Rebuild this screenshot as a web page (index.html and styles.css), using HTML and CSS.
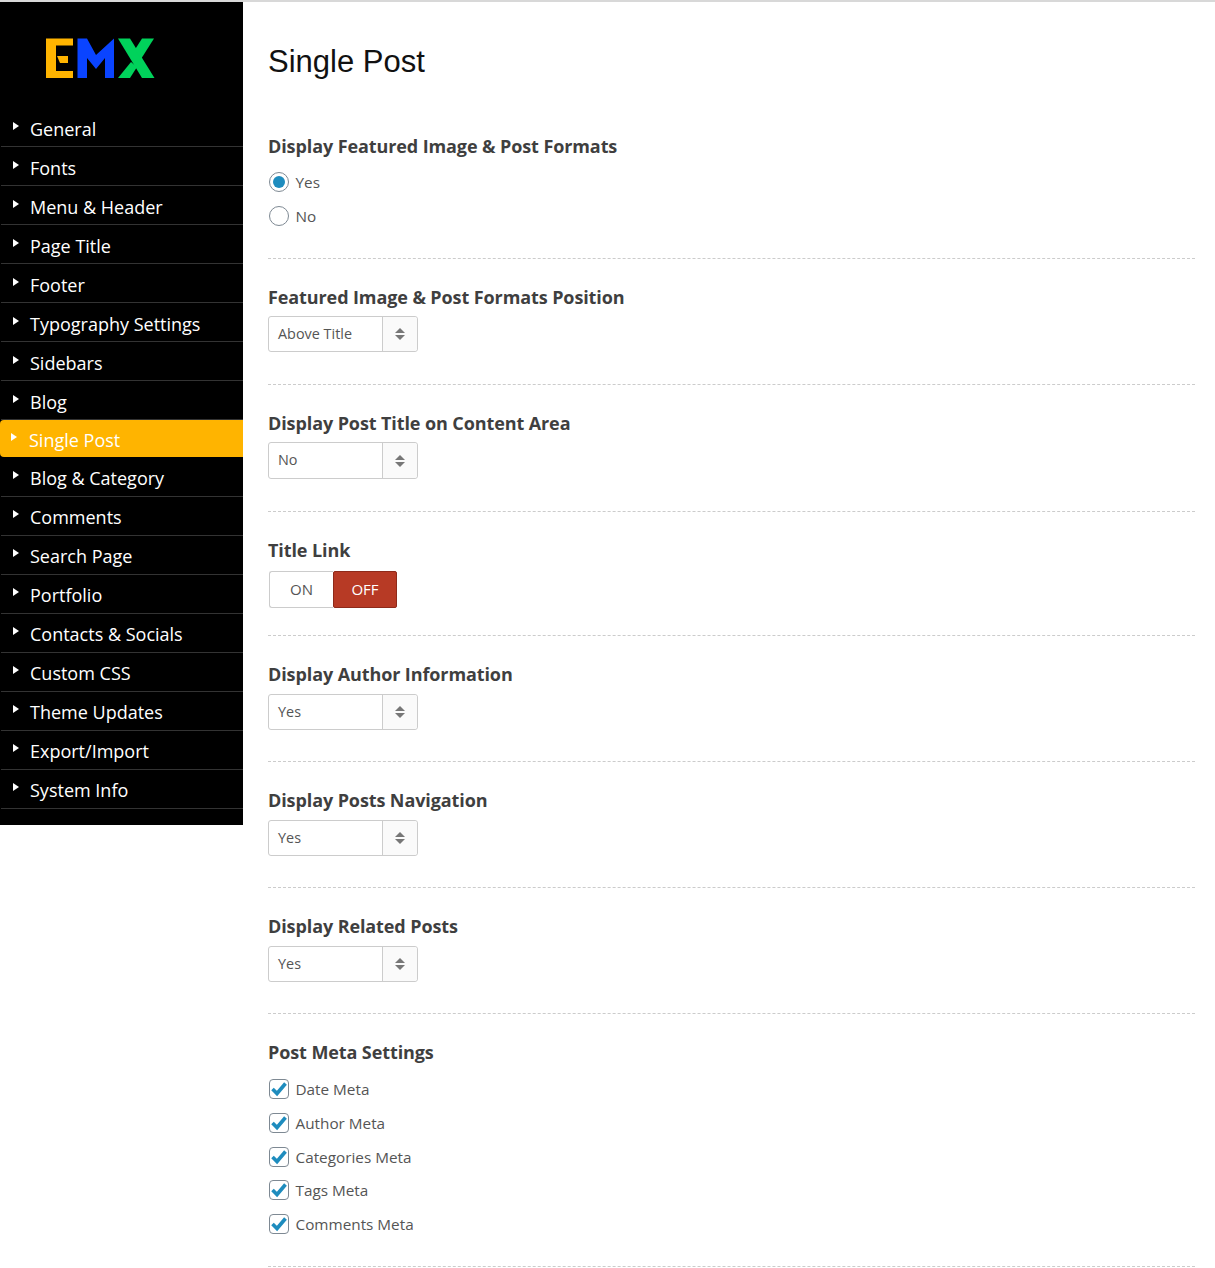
FILE: index.html
```html
<!DOCTYPE html>
<html lang="en">
<head>
<meta charset="utf-8">
<title>Single Post</title>
<link rel="stylesheet" href="styles.css">
</head>
<body>
<div class="page">
  <nav class="sidebar">
    <div class="logo">
      <svg width="110" height="42" viewBox="46 38 110 42" aria-label="EMX">
        <path fill="#ffb400" d="M46 38.500H73V45.500H56V71H73V78H46Z"/>
        <path fill="#ffb400" d="M57 56H68V63H60Z"/>
        <path fill="#0a44ff" d="M77.500 38.500H87L96 55L114 38.500V78H105V58L96 69L87 58V78H77.500Z"/>
        <path fill="#00d25b" d="M118 38.500H130L154.500 78H142Z"/>
        <path fill="#00d25b" d="M154 38.500H142L135 49.500L141 59Z"/>
        <path fill="#00d25b" d="M118 78H130L137 67L131 62Z"/>
      </svg>
    </div>
    <ul class="menu">
      <li class="item"><span class="arrow"></span>General</li>
      <li class="item"><span class="arrow"></span>Fonts</li>
      <li class="item"><span class="arrow"></span>Menu &amp; Header</li>
      <li class="item"><span class="arrow"></span>Page Title</li>
      <li class="item"><span class="arrow"></span>Footer</li>
      <li class="item"><span class="arrow"></span>Typography Settings</li>
      <li class="item"><span class="arrow"></span>Sidebars</li>
      <li class="item"><span class="arrow"></span>Blog</li>
      <li class="item active"><span class="arrow"></span>Single Post</li>
      <li class="item"><span class="arrow"></span>Blog &amp; Category</li>
      <li class="item"><span class="arrow"></span>Comments</li>
      <li class="item"><span class="arrow"></span>Search Page</li>
      <li class="item"><span class="arrow"></span>Portfolio</li>
      <li class="item"><span class="arrow"></span>Contacts &amp; Socials</li>
      <li class="item"><span class="arrow"></span>Custom CSS</li>
      <li class="item"><span class="arrow"></span>Theme Updates</li>
      <li class="item"><span class="arrow"></span>Export/Import</li>
      <li class="item"><span class="arrow"></span>System Info</li>
    </ul>
  </nav>
  <main class="content">
    <h1 class="title">Single Post</h1>

    <section class="field first">
      <h2 class="label">Display Featured Image &amp; Post Formats</h2>
      <div class="choices">
        <div class="choice"><span class="radio on"></span>Yes</div>
        <div class="choice"><span class="radio"></span>No</div>
      </div>
    </section>

    <section class="field">
      <h2 class="label">Featured Image &amp; Post Formats Position</h2>
      <div class="select"><span class="value">Above Title</span><span class="spin"><i class="up"></i><i class="down"></i></span></div>
    </section>

    <section class="field tall">
      <h2 class="label">Display Post Title on Content Area</h2>
      <div class="select"><span class="value">No</span><span class="spin"><i class="up"></i><i class="down"></i></span></div>
    </section>

    <section class="field switch">
      <h2 class="label">Title Link</h2>
      <div class="toggle"><span class="opt">ON</span><span class="opt off">OFF</span></div>
    </section>

    <section class="field later">
      <h2 class="label">Display Author Information</h2>
      <div class="select"><span class="value">Yes</span><span class="spin"><i class="up"></i><i class="down"></i></span></div>
    </section>

    <section class="field later">
      <h2 class="label">Display Posts Navigation</h2>
      <div class="select"><span class="value">Yes</span><span class="spin"><i class="up"></i><i class="down"></i></span></div>
    </section>

    <section class="field later">
      <h2 class="label">Display Related Posts</h2>
      <div class="select"><span class="value">Yes</span><span class="spin"><i class="up"></i><i class="down"></i></span></div>
    </section>

    <section class="field meta">
      <h2 class="label">Post Meta Settings</h2>
      <div class="choices">
        <div class="choice"><span class="check"><svg width="18" height="16" viewBox="0 0 18 16"><path d="M2.500 8L7 12.500L15.500 2.500" fill="none" stroke="#1e8cbe" stroke-width="3.600"/></svg></span>Date Meta</div>
        <div class="choice"><span class="check"><svg width="18" height="16" viewBox="0 0 18 16"><path d="M2.500 8L7 12.500L15.500 2.500" fill="none" stroke="#1e8cbe" stroke-width="3.600"/></svg></span>Author Meta</div>
        <div class="choice"><span class="check"><svg width="18" height="16" viewBox="0 0 18 16"><path d="M2.500 8L7 12.500L15.500 2.500" fill="none" stroke="#1e8cbe" stroke-width="3.600"/></svg></span>Categories Meta</div>
        <div class="choice"><span class="check"><svg width="18" height="16" viewBox="0 0 18 16"><path d="M2.500 8L7 12.500L15.500 2.500" fill="none" stroke="#1e8cbe" stroke-width="3.600"/></svg></span>Tags Meta</div>
        <div class="choice"><span class="check"><svg width="18" height="16" viewBox="0 0 18 16"><path d="M2.500 8L7 12.500L15.500 2.500" fill="none" stroke="#1e8cbe" stroke-width="3.600"/></svg></span>Comments Meta</div>
      </div>
    </section>
  </main>
</div>
</body>
</html>
```
FILE: styles.css
```css
* { box-sizing: border-box; }
html, body { margin: 0; padding: 0; background: #fff; }
body { font-family: "Open Sans", "Liberation Sans", sans-serif; color: #444; height: 1268px; overflow: hidden; }
.page { display: flex; align-items: flex-start; border-top: 2px solid #d8d8d8; }

.sidebar { width: 243px; height: 823px; flex: none; background: #000; }
.logo { height: 106px; padding: 36px 0 0 46px; }
.logo svg { display: block; }
.menu { list-style: none; margin: 0; padding: 0; }
.item { position: relative; height: 39px; margin-left: 1px; padding: 8px 0 0 29px; border-bottom: 1px solid #333; color: #fff; font-size: 18px; line-height: 26px; }
.arrow { position: absolute; left: 12px; top: 14px; width: 0; height: 0; border-style: solid; border-width: 4px 0 4px 6px; border-color: transparent transparent transparent #fff; }
.item.active { height: 37px; margin: 0 0 1px; padding: 7px 0 0 29px; background: #ffb400; border-bottom: 0; border-radius: 4px 0 0 4px; }
.item.active .arrow { left: 11px; top: 13px; }
.item.active ~ .item { padding-top: 7px; }
.item.active ~ .item .arrow { top: 13px; }

.content { flex: 1; padding: 0 20px 0 25px; }
.title { margin: 0; padding-top: 42px; height: 117px; font: 400 31px/36px "Liberation Sans", Arial, sans-serif; color: #111; }
.field { padding: 26px 0 32px; border-bottom: 1px dashed #ccc; }
.field.first { padding-top: 15px; padding-bottom: 32px; }
.field.switch { padding-bottom: 27px; }
.field.later { padding-bottom: 31px; }
.label { margin: 0 0 7px; font-size: 18px; line-height: 24px; font-weight: 700; color: #3f3f3f; letter-spacing: -0.1px; }
.switch .label { margin-bottom: 9px; }
.later .label { margin-bottom: 8px; }

.choices { display: flex; flex-direction: column; gap: 13.800px; padding-top: 8px; }
.first .choices { padding-top: 7px; gap: 14px; }
.choice { display: flex; align-items: center; height: 20px; font-size: 15.300px; line-height: 20px; color: #555; }
.radio { width: 20px; height: 20px; margin: 0 6.500px 0 1px; flex: none; border: 1px solid #7e8993; border-radius: 50%; background: #fff; display: flex; align-items: center; justify-content: center; }
.radio.on::after { content: ""; width: 12px; height: 12px; border-radius: 50%; background: #1e8cbe; }
.check { width: 20px; height: 20px; margin: 0 6.500px 0 1px; flex: none; border: 1px solid #7e8993; border-radius: 4px; background: #fff; display: flex; align-items: center; justify-content: center; }

.select { display: flex; width: 150px; height: 36px; border: 1px solid #ccc; border-radius: 3px; background: #fff; font-size: 14.400px; color: #555; }
.tall .select { height: 37px; }
.value { width: 114px; padding-left: 9px; line-height: 34px; border-right: 1px solid #ccc; }
.spin { flex: 1; display: flex; flex-direction: column; align-items: center; justify-content: center; gap: 2px; background: #fafafa; border-radius: 0 3px 3px 0; }
.spin i { display: block; width: 0; height: 0; border-style: solid; border-color: transparent; }
.spin .up { border-width: 0 5px 5px; border-bottom-color: #777; }
.spin .down { border-width: 5px 5px 0; border-top-color: #777; }

.toggle { display: flex; width: 128px; height: 37px; margin-left: 1px; font-size: 15px; }
.opt { width: 64px; padding-bottom: 2px; display: flex; align-items: center; justify-content: center; background: #fff; color: #555; border: 1px solid #ccc; border-right: 0; border-radius: 3px 0 0 3px; }
.opt.off { background: #b73a25; color: #fff; border: 1px solid #8e2a1a; border-radius: 2px; }
```
